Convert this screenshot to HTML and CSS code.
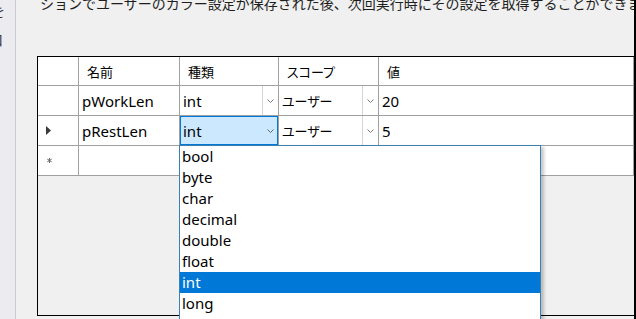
FILE: index.html
```html
<!DOCTYPE html>
<html lang="ja">
<head>
<meta charset="utf-8">
<title>Settings grid</title>
<link rel="stylesheet" href="styles.css">
</head>
<body>
<div class="window">
  <aside class="side">
    <span class="frag f1">を</span>
    <span class="frag f2">口</span>
  </aside>
  <main class="main">
    <p class="desc">ションでユーザーのカラー設定が保存された後、次回実行時にその設定を取得することができます。</p>
    <div class="grid">
      <div class="row head">
        <div class="cell rh"></div>
        <div class="cell hd ja">名前</div>
        <div class="cell hd ja">種類</div>
        <div class="cell hd ja">スコープ</div>
        <div class="cell hd ja">値</div>
      </div>
      <div class="row">
        <div class="cell rh"></div>
        <div class="cell">pWorkLen</div>
        <div class="cell combo"><span class="val">int</span><span class="btn"><svg width="7" height="4" viewBox="0 0 7 4"><polyline points="0.5,0.5 3.5,3.5 6.5,0.5" fill="none" stroke="#7a7a7a" stroke-width="1"/></svg></span></div>
        <div class="cell combo"><span class="val ja">ユーザー</span><span class="btn"><svg width="7" height="4" viewBox="0 0 7 4"><polyline points="0.5,0.5 3.5,3.5 6.5,0.5" fill="none" stroke="#7a7a7a" stroke-width="1"/></svg></span></div>
        <div class="cell">20</div>
      </div>
      <div class="row">
        <div class="cell rh"><svg class="cur" width="5" height="9" viewBox="0 0 5 9"><polygon points="0,0 5,4.5 0,9" fill="#3a3a3a"/></svg></div>
        <div class="cell">pRestLen</div>
        <div class="cell combo sel"><span class="val">int</span><span class="btn"><svg width="7" height="4" viewBox="0 0 7 4"><polyline points="0.5,0.5 3.5,3.5 6.5,0.5" fill="none" stroke="#6a6a6a" stroke-width="1"/></svg></span></div>
        <div class="cell combo"><span class="val ja">ユーザー</span><span class="btn"><svg width="7" height="4" viewBox="0 0 7 4"><polyline points="0.5,0.5 3.5,3.5 6.5,0.5" fill="none" stroke="#7a7a7a" stroke-width="1"/></svg></span></div>
        <div class="cell">5</div>
      </div>
      <div class="row">
        <div class="cell rh"><svg class="star" width="5" height="5" viewBox="0 0 5 5"><path d="M2.5 0V5M0.3 1.2L4.7 3.8M0.3 3.8L4.7 1.2" stroke="#6a6a6a" stroke-width="1"/></svg></div>
        <div class="cell"></div>
        <div class="cell"></div>
        <div class="cell"></div>
        <div class="cell"></div>
      </div>
      <ul class="dropdown">
        <li class="item">bool</li>
        <li class="item">byte</li>
        <li class="item">char</li>
        <li class="item">decimal</li>
        <li class="item">double</li>
        <li class="item">float</li>
        <li class="item active">int</li>
        <li class="item">long</li>
        <li class="item">object</li>
      </ul>
    </div>
  </main>
</div>
</body>
</html>
```
FILE: styles.css
```css
* { box-sizing: border-box; }
html, body { margin: 0; padding: 0; }
body {
  width: 636px;
  height: 319px;
  overflow: hidden;
  background: #f0f0f0;
  font-family: "Noto Sans", "Noto Sans CJK JP", sans-serif;
  color: #000;
}
.window { display: flex; height: 319px; }
.side {
  width: 16px;
  flex: none;
  background: #ebebf0;
  border-right: 1px solid #cacad4;
  overflow: hidden;
  display: flex;
  flex-direction: column;
  font-family: "Noto Sans CJK JP", sans-serif;
  font-size: 14px;
  line-height: 16px;
  color: #333;
}
.frag { display: block; margin-left: -9px; }
.f1 { margin-top: 3px; }
.f2 { margin-top: 12px; margin-left: -11px; }
.main {
  flex: 1;
  min-width: 0;
  border-right: 2px solid #000;
  overflow: hidden;
}
.desc {
  margin: -5px 0 0;
  padding-left: 24px;
  font-family: "Noto Sans CJK JP", sans-serif;
  font-size: 14px;
  line-height: 16px;
  white-space: nowrap;
  color: #1e1e1e;
}
.grid {
  margin: 45px 0 0 21px;
  height: 260px;
  border: 1px solid #000;
  border-right: none;
  background: #f0f0f0;
  position: relative;
}
.row {
  display: grid;
  grid-template-columns: 41px 101px 99px 100px 1fr;
  height: 30px;
}
.row.head { height: 29px; }
.cell {
  border-right: 1px solid #a0a0a0;
  border-bottom: 1px solid #a0a0a0;
  background: #fff;
  display: flex;
  align-items: center;
  padding-left: 3px;
  font-size: 15px;
  white-space: nowrap;
  overflow: hidden;
}
.cell.rh { padding-left: 8px; }
.cell.hd { padding-left: 8px; }
.ja {
  font-family: "Noto Sans CJK JP", sans-serif;
  font-size: 13px;
  font-feature-settings: "palt";
}
.combo { padding-right: 0; }
.combo .val { flex: 1; }
.combo .btn {
  width: 16px;
  height: 100%;
  border-left: 1px solid #d4d4d4;
  display: flex;
  align-items: center;
  justify-content: center;
}
.combo.sel {
  background: #cce8ff;
  box-shadow: inset 0 0 0 1px #0078d7;
  border-bottom-color: #0078d7;
}
.combo.sel .btn { border-left-color: transparent; }
.star { margin-left: 1px; }
.dropdown {
  position: absolute;
  left: 141px;
  top: 88px;
  width: 362px;
  height: 200px;
  margin: 0;
  padding: 0;
  list-style: none;
  background: #fff;
  border: 1px solid #3c7fb1;
  box-shadow: 3px 2px 3px rgba(0, 0, 0, 0.22);
}
.item {
  height: 21px;
  line-height: 21px;
  padding-left: 2px;
  font-size: 15px;
}
.item.active { background: #0078d7; color: #fff; }
```
